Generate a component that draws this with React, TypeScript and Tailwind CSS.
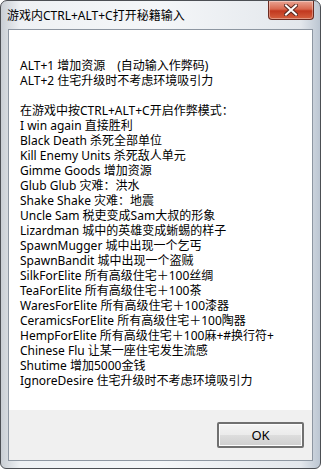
import React from "react";

const lines: string[] = [
  "ALT+1 增加资源　(自动输入作弊码)",
  "ALT+2 住宅升级时不考虑环境吸引力",
  "",
  "在游戏中按CTRL+ALT+C开启作弊模式：",
  "I win again 直接胜利",
  "Black Death 杀死全部单位",
  "Kill Enemy Units 杀死敌人单元",
  "Gimme Goods 增加资源",
  "Glub Glub 灾难：洪水",
  "Shake Shake 灾难：地震",
  "Uncle Sam 税吏变成Sam大叔的形象",
  "Lizardman 城中的英雄变成蜥蜴的样子",
  "SpawnMugger 城中出现一个乞丐",
  "SpawnBandit 城中出现一个盗贼",
  "SilkForElite 所有高级住宅＋100丝绸",
  "TeaForElite 所有高级住宅＋100茶",
  "WaresForElite 所有高级住宅＋100漆器",
  "CeramicsForElite 所有高级住宅＋100陶器",
  "HempForElite 所有高级住宅＋100麻+#换行符+",
  "Chinese Flu 让某一座住宅发生流感",
  "Shutime 增加5000金钱",
  "IgnoreDesire 住宅升级时不考虑环境吸引力",
];

function CloseButton() {
  return (
    <div className="w-[46px] h-[19px] rounded-b-[4px] border border-t-0 border-[#6b2a20] bg-[linear-gradient(#e9a493,#d8684f_45%,#c2381f_55%,#d5603f)] flex items-center justify-center shadow-[inset_0_0_0_1px_rgba(255,255,255,0.35)]">
      <svg width="14" height="12" viewBox="0 0 14 12">
        <path
          d="M2 1.5 L12 10.5 M12 1.5 L2 10.5"
          stroke="#5a2a22"
          strokeWidth="4"
          strokeLinecap="square"
        />
        <path
          d="M2 1.5 L12 10.5 M12 1.5 L2 10.5"
          stroke="#ffffff"
          strokeWidth="2"
          strokeLinecap="square"
        />
      </svg>
    </div>
  );
}

export default function App() {
  return (
    <div className="w-[321px] h-[469px] bg-white">
      <div
        className="w-[321px] h-[469px] flex flex-col rounded-t-[7px] rounded-b-[6px] border border-[#4c4f54] overflow-hidden bg-[linear-gradient(90deg,#c9ced4,#eef1f4_6%,#f4f6f8_50%,#e3e7ec_94%,#bcc6d2)]"
        style={{ fontFamily: '"Noto Sans", "Noto Sans CJK SC", sans-serif' }}
      >
        {/* title bar */}
        <div className="h-[28px] flex items-start justify-between pl-[6px] pr-[6px]">
          <span className="mt-[6px] text-[12px] leading-[18px] text-black">
            游戏内CTRL+ALT+C打开秘籍输入
          </span>
          <CloseButton />
        </div>

        {/* client area */}
        <div className="flex-1 mx-[7px] flex flex-col border border-[#8d96a1]">
          <div className="flex-1 bg-white pt-[28px] pl-[11px] text-[12px] leading-[15px] text-black">
            {lines.map((l, i) => (
              <div key={i} className="h-[15px] whitespace-pre">
                {l}
              </div>
            ))}
          </div>
          <div className="h-[50px] bg-[#f0f0f0] flex items-center justify-end pr-[8px]">
            <button className="w-[87px] h-[26px] border-2 border-[#707070] rounded-[2px] bg-[linear-gradient(#f4f4f4,#ebebeb_50%,#dddddd_51%,#cfcfcf)] shadow-[inset_0_0_0_1px_#fcfcfc] text-[13px] text-black leading-none">
              OK
            </button>
          </div>
        </div>

        {/* bottom frame */}
        <div className="h-[7px]" />
      </div>
    </div>
  );
}
